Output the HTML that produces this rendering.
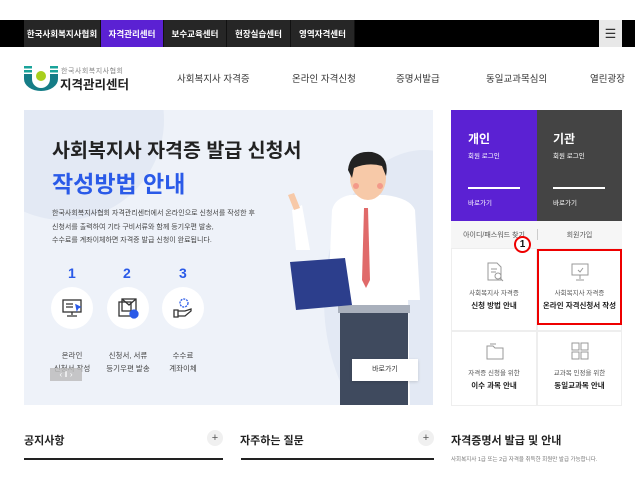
<!DOCTYPE html>
<html><head><meta charset="utf-8"><style>
*{margin:0;padding:0;box-sizing:border-box}
body{width:635px;height:478px;background:#fff;font-family:"Liberation Sans","Noto Sans CJK KR",sans-serif;position:relative;overflow:hidden;color:#222}
.a{position:absolute}
.tab{position:absolute;top:20px;height:27px;color:#fff;font-size:8.5px;font-weight:bold;display:flex;align-items:center;justify-content:center;background:#262626;border-right:1px solid #111}
.nav{position:absolute;top:71px;font-size:9.5px;color:#333;white-space:nowrap}
.cell{position:absolute;background:#fff;border:1px solid #eee;text-align:center}
.cell .s{font-size:6.5px;color:#555;position:absolute;width:100%;left:0}
.cell .b{font-size:7.5px;font-weight:bold;color:#222;position:absolute;width:100%;left:0}
.circ{position:absolute;width:42px;height:42px;border-radius:50%;background:#fff}
.num{position:absolute;font-size:14px;color:#2a5ae8;font-weight:bold}
.lbl{position:absolute;font-size:7.5px;color:#444;text-align:center;width:60px;line-height:13px}
</style></head><body>
<div class="a" style="left:0;top:20px;width:635px;height:27px;background:#000"></div>
<div class="tab" style="left:24px;width:77px">한국사회복지사협회</div>
<div class="tab" style="left:101px;width:63px;background:#5b21d3">자격관리센터</div>
<div class="tab" style="left:164px;width:63px">보수교육센터</div>
<div class="tab" style="left:227px;width:64px">현장실습센터</div>
<div class="tab" style="left:291px;width:64px">영역자격센터</div>
<div class="a" style="left:599px;top:20px;width:23px;height:27px;background:#e8e8e8;color:#333;font-size:13px;text-align:center;line-height:27px">☰</div>

<svg class="a" style="left:24px;top:66px" width="34" height="26" viewBox="0 0 34 26">
<rect x="0" y="0" width="8" height="2.5" fill="#1aa39a"/><rect x="0" y="4" width="8" height="2.5" fill="#1aa39a"/>
<rect x="26" y="0" width="8" height="2.5" fill="#1aa39a"/><rect x="26" y="4" width="8" height="2.5" fill="#1aa39a"/>
<path d="M0 8 H8 V13 A9 9 0 0 0 26 13 V8 H34 V13 A17 12 0 0 1 0 13Z" fill="#157d87"/>
<circle cx="17" cy="10" r="5" fill="#a8cf1d"/></svg>
<div class="a" style="left:61px;top:66px;font-size:7px;color:#888;letter-spacing:0.5px">한국사회복지사협회</div>
<div class="a" style="left:60px;top:74px;font-size:12.5px;font-weight:bold;color:#222">지격관리센터</div>
<div class="nav" style="left:177px">사회복지사 자격증</div>
<div class="nav" style="left:292px">온라인 자격신청</div>
<div class="nav" style="left:396px">증명서발급</div>
<div class="nav" style="left:486px">동일교과목심의</div>
<div class="nav" style="left:590px">열린광장</div>

<div class="a" style="left:24px;top:110px;width:409px;height:295px;background:#eef2f9;overflow:hidden">
 <div class="a" style="left:-60px;top:-90px;width:200px;height:200px;border-radius:50%;background:#e3e9f4"></div>
 <div class="a" style="left:300px;top:40px;width:200px;height:300px;border-radius:50%;background:#e3e9f4"></div>
</div>
<div class="a" style="left:52px;top:134px;font-size:19.5px;font-weight:bold;color:#222;white-space:nowrap">사회복지사 자격증 발급 신청서</div>
<div class="a" style="left:52px;top:165px;font-size:23px;font-weight:bold;color:#2a5ae8;white-space:nowrap">작성방법 안내</div>
<div class="a" style="left:52px;top:207px;font-size:7px;color:#444;line-height:13.5px;white-space:nowrap">한국사회복지사협회 자격관리센터에서 온라인으로 신청서를 작성한 후<br>신청서를 출력하여 기타 구비서류와 함께 등기우편 발송,<br>수수료를 계좌이체하면 자격증 발급 신청이 완료됩니다.</div>
<div class="num" style="left:68px;top:265px">1</div>
<div class="num" style="left:123px;top:265px">2</div>
<div class="num" style="left:179px;top:265px">3</div>
<div class="circ" style="left:51px;top:287px"></div>
<div class="circ" style="left:107px;top:287px"></div>
<div class="circ" style="left:162px;top:287px"></div>
<svg class="a" style="left:61px;top:298px" width="22" height="20" viewBox="0 0 22 20" fill="none" stroke="#333" stroke-width="1.3"><rect x="2" y="2" width="18" height="12"/><path d="M11 14v3M6 18h10M5 6h7M5 9h7"/><path d="M15 7l4 2-2 1-1 2z" fill="#2a5ae8" stroke="#2a5ae8"/></svg>
<svg class="a" style="left:117px;top:297px" width="22" height="22" viewBox="0 0 22 22" fill="none" stroke="#333" stroke-width="1.3"><rect x="2" y="5" width="12" height="14"/><rect x="5" y="2" width="14" height="12"/><path d="M5 2l7 6 7-6"/><circle cx="17" cy="17" r="4" fill="#2a5ae8" stroke="#2a5ae8"/></svg>
<svg class="a" style="left:172px;top:297px" width="22" height="22" viewBox="0 0 22 22" fill="none" stroke="#333" stroke-width="1.3"><circle cx="12" cy="6" r="4" stroke="#2a5ae8" stroke-dasharray="2 1"/><path d="M2 13h4v7H2zM6 14h7l6-2v2l-6 5H6"/></svg>
<div class="lbl" style="left:42px;top:349px">온라인<br>신청서 작성</div>
<div class="lbl" style="left:98px;top:349px">신청서, 서류<br>등기우편 발송</div>
<div class="lbl" style="left:153px;top:349px">수수료<br>계좌이체</div>
<div class="a" style="left:50px;top:368px;width:32px;height:13px;background:#bbb;color:#fff;font-size:8px;line-height:13px;text-align:center;opacity:.8">‹ ‖ ›</div>

<svg class="a" style="left:280px;top:150px" width="140" height="255" viewBox="0 0 140 255">
<path d="M70 45 Q55 48 52 60 L48 150 L60 150 L60 255 L130 255 L128 150 L140 150 L135 60 Q130 48 105 45Z" fill="#fff"/>
<rect x="60" y="160" width="68" height="95" fill="#3f4a5e"/>
<rect x="58" y="155" width="72" height="8" fill="#a9b0bc"/>
<path d="M84 58 L88 58 L90 130 L86 138 L82 130Z" fill="#e06a6a"/>
<ellipse cx="88" cy="28" rx="18" ry="22" fill="#f7c9a8"/>
<path d="M68 20 Q70 0 92 2 Q110 6 106 26 L102 16 Q88 12 74 18 L72 28Z" fill="#222"/>
<circle cx="76" cy="36" r="3" fill="#f39a8a"/><circle cx="100" cy="36" r="3" fill="#f39a8a"/>
<path d="M10 112 L65 108 L72 155 L16 160Z" fill="#2c3e8c"/>
<path d="M12 60 L16 100 L30 100 L22 55Z" fill="#fff"/>
<path d="M8 45 L14 60 L20 58 L14 43Z" fill="#f7c9a8"/>
</svg>
<div class="a" style="left:352px;top:359px;width:66px;height:22px;background:#fff;font-size:7px;line-height:22px;text-align:center;color:#333;box-shadow:0 1px 3px rgba(0,0,0,.15)">바로가기</div>

<div class="a" style="left:451px;top:110px;width:86px;height:111px;background:#5b21d3;color:#fff">
 <div class="a" style="left:17px;top:20px;font-size:12px;font-weight:bold">개인</div>
 <div class="a" style="left:17px;top:40px;font-size:6.5px">회원 로그인</div>
 <div class="a" style="left:17px;top:77px;width:52px;height:2px;background:#fff"></div>
 <div class="a" style="left:17px;top:87px;font-size:6.5px">바로가기</div>
</div>
<div class="a" style="left:537px;top:110px;width:85px;height:111px;background:#444;color:#fff">
 <div class="a" style="left:16px;top:20px;font-size:12px;font-weight:bold">기관</div>
 <div class="a" style="left:16px;top:40px;font-size:6.5px">회원 로그인</div>
 <div class="a" style="left:16px;top:77px;width:52px;height:2px;background:#fff"></div>
 <div class="a" style="left:16px;top:87px;font-size:6.5px">바로가기</div>
</div>
<div class="a" style="left:451px;top:221px;width:171px;height:27px;background:#f6f6f6;font-size:7px;color:#555">
 <div class="a" style="left:0;width:86px;text-align:center;top:9px">아이디/패스워드 찾기</div>
 <div class="a" style="left:86px;width:85px;text-align:center;top:9px">회원가입</div>
 <div class="a" style="left:86px;top:8px;width:1px;height:11px;background:#ccc"></div>
</div>
<div class="cell" style="left:451px;top:248px;width:86px;height:83px">
 <svg class="a" style="left:34px;top:13px" width="18" height="20" viewBox="0 0 18 20" fill="none" stroke="#999" stroke-width="1"><path d="M2 1h9l4 4v13H2z"/><path d="M5 7h6M5 10h5"/><circle cx="12" cy="14" r="3"/><path d="M14 16l3 3"/></svg>
 <div class="s" style="top:38px">사회복지사 자격증</div><div class="b" style="top:51px">신청 방법 안내</div>
</div>
<div class="cell" style="left:537px;top:248px;width:85px;height:83px">
 <svg class="a" style="left:32px;top:13px" width="20" height="20" viewBox="0 0 20 20" fill="none" stroke="#999" stroke-width="1"><rect x="2" y="2" width="16" height="11"/><path d="M10 13v4M6 18h8M8 8l2 2 3-4"/></svg>
 <div class="s" style="top:38px">사회복지사 자격증</div><div class="b" style="top:51px">온라인 자격신청서 작성</div>
</div>
<div class="a" style="left:537px;top:249px;width:85px;height:76px;border:2.5px solid #e00"></div>
<div class="a" style="left:514px;top:236px;width:17px;height:17px;border:2px solid #e00;border-radius:50%;background:#fff;font-size:10px;font-weight:bold;text-align:center;line-height:13px;color:#111">1</div>
<div class="cell" style="left:451px;top:331px;width:86px;height:75px">
 <svg class="a" style="left:34px;top:10px" width="18" height="18" viewBox="0 0 18 18" fill="none" stroke="#999" stroke-width="1"><path d="M1 4h6l2 2h8v11H1z"/><path d="M4 2h6"/></svg>
 <div class="s" style="top:35px">자격증 신청을 위한</div><div class="b" style="top:48px">이수 과목 안내</div>
</div>
<div class="cell" style="left:537px;top:331px;width:85px;height:75px">
 <svg class="a" style="left:33px;top:10px" width="18" height="18" viewBox="0 0 18 18" fill="none" stroke="#999" stroke-width="1"><rect x="1" y="1" width="7" height="7"/><rect x="10" y="1" width="7" height="7"/><rect x="1" y="10" width="7" height="7"/><rect x="10" y="10" width="7" height="7"/></svg>
 <div class="s" style="top:35px">교과목 인정을 위한</div><div class="b" style="top:48px">동일교과목 안내</div>
</div>

<div class="a" style="left:24px;top:432px;font-size:11px;font-weight:bold">공지사항</div>
<div class="a" style="left:207px;top:430px;width:16px;height:16px;border-radius:50%;background:#f0f0f0;text-align:center;line-height:16px;font-size:11px;color:#555">+</div>
<div class="a" style="left:24px;top:458px;width:199px;height:2px;background:#222"></div>
<div class="a" style="left:240px;top:432px;font-size:11px;font-weight:bold">자주하는 질문</div>
<div class="a" style="left:418px;top:430px;width:16px;height:16px;border-radius:50%;background:#f0f0f0;text-align:center;line-height:16px;font-size:11px;color:#555">+</div>
<div class="a" style="left:241px;top:458px;width:193px;height:2px;background:#222"></div>
<div class="a" style="left:451px;top:432px;font-size:11px;font-weight:bold;white-space:nowrap">자격증명서 발급 및 안내</div>
<div class="a" style="left:451px;top:455px;font-size:5.5px;color:#777;white-space:nowrap">사회복지사 1급 또는 2급 자격을 취득한 회원만 발급 가능합니다.</div>
</body></html>
